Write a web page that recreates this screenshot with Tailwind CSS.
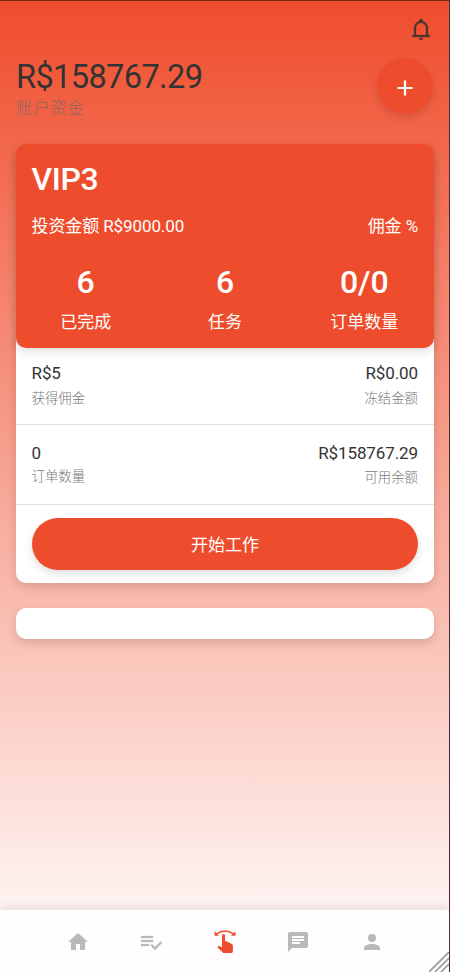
<!DOCTYPE html>
<html lang="zh">
<head>
<meta charset="utf-8">
<script src="https://cdn.jsdelivr.net/npm/@tailwindcss/browser@4"></script>
</head>
<body class="w-[450px] h-[972px] overflow-hidden">
<div class="relative flex h-[972px] w-[450px] flex-col overflow-hidden border-t border-r border-t-[#6e2c18] border-r-[#4a2a30] bg-[linear-gradient(#f04d2c,#fff)] font-['Roboto','Noto_Sans_CJK_SC',sans-serif] text-[#333]">
  <header class="flex h-[57px] shrink-0 justify-end pt-4 pr-4">
    <svg class="size-6" viewBox="0 0 24 24" fill="#4d3530" stroke="#4d3530" stroke-width="0.3"><path d="M10 21H14C14 22.1 13.1 23 12 23S10 22.1 10 21M21 19V20H3V19L5 17V11C5 7.9 7 5.2 10 4.3V4C10 2.9 10.9 2 12 2S14 2.9 14 4V4.3C17 5.2 19 7.9 19 11V17L21 19M17 11C17 8.2 14.8 6 12 6S7 8.2 7 11V18H17V11Z"/></svg>
  </header>
  <section class="flex h-[86px] shrink-0 justify-between px-4">
    <div>
      <div class="h-[38px] text-[32.5px] leading-[38px] tracking-[-0.6px]">R$158767.29</div>
      <div class="text-[17px] leading-6 font-light text-[#6a6a6a]/75">账户资金</div>
    </div>
    <div class="flex size-14 items-center justify-center rounded-full bg-[#ee4d2d] shadow-[0_4px_8px_rgba(0,0,0,0.12)]">
      <svg class="mt-[3px] size-[22px]" viewBox="0 0 24 24" fill="#fff"><path d="M20.2 13.2H13.2V20.2H10.8V13.2H3.8V10.8H10.8V3.8H13.2V10.8H20.2Z"/></svg>
    </div>
  </section>
  <main class="mr-[15px] ml-4 shrink-0">
    <section class="h-[439px] rounded-[10px] bg-[linear-gradient(transparent_160px,white_160px)] shadow-[0_4px_10px_rgba(0,0,0,0.14)]">
      <div class="h-[204px] rounded-[10px] bg-[#ee4d2d] pt-4 pr-4 pl-[15.5px] text-white shadow-[0_4px_8px_rgba(0,0,0,0.12)]">
        <h1 class="h-[38px] text-[32px] leading-[38px] font-medium tracking-[-0.4px]">VIP3</h1>
        <div class="mt-4 flex h-6 justify-between text-[17px] leading-6 tracking-[-0.1px]"><span>投资金额 R$9000.00</span><span>佣金 %</span></div>
        <div class="-mr-4 -ml-[15.5px] mt-6 grid grid-cols-3 text-center">
          <div><div class="text-[32px] leading-10 font-medium">6</div><div class="text-[17px] leading-10">已完成</div></div>
          <div><div class="text-[32px] leading-10 font-medium">6</div><div class="text-[17px] leading-10">任务</div></div>
          <div><div class="text-[32px] leading-10 font-medium">0/0</div><div class="text-[17px] leading-10">订单数量</div></div>
        </div>
      </div>
      <div class="flex h-[77px] justify-between border-b border-[#e0e0e0] pt-[13px] pr-4 pl-[15.5px]">
        <div><div class="text-[17px] leading-6 tracking-[-0.1px]">R$5</div><div class="text-[13.4px] leading-7 font-light text-[#777]">获得佣金</div></div>
        <div class="text-right"><div class="text-[17px] leading-6 tracking-[-0.1px]">R$0.00</div><div class="text-[13.4px] leading-7 font-light text-[#777]">冻结金额</div></div>
      </div>
      <div class="flex h-20 justify-between border-b border-[#e0e0e0] pt-4 pr-4 pl-[15.5px]">
        <div><div class="text-[17px] leading-6">0</div><div class="text-[13.4px] leading-[24px] font-light text-[#777]">订单数量</div></div>
        <div class="text-right"><div class="text-[17px] leading-6 tracking-[-0.1px]">R$158767.29</div><div class="text-[13.4px] leading-[26px] font-light text-[#777]">可用余额</div></div>
      </div>
      <div class="px-4 pt-[13px]"><button class="block h-[52px] w-full rounded-full bg-[#ee4d2d] pt-[3px] text-[17px] text-white shadow-[0_4px_8px_rgba(0,0,0,0.12)]">开始工作</button></div>
    </section>
    <section class="mt-[25px] h-[31px] rounded-[10px] bg-white shadow-[0_4px_10px_rgba(0,0,0,0.14)]"></section>
  </main>
  <nav class="mt-auto flex h-[62px] shrink-0 justify-center gap-[49.5px] bg-[#fffdfd] pt-[19.5px] text-[#b9b9b9] shadow-[0_-3px_9px_rgba(0,0,0,0.1)]">
    <svg class="size-6" viewBox="0 0 24 24" fill="currentColor"><path d="M10,20V14H14V20H19V12H22L12,3L2,12H5V20H10Z"/></svg>
    <svg class="size-6" viewBox="0 0 24 24" fill="currentColor" stroke="currentColor" stroke-width="0.3"><path d="M14 10H2v2h12v-2M14 6H2v2h12V6M2 16h8v-2H2v2M21.5 11.5L23 13l-7 7-4.5-4.5L13 14l3 3 5.5-5.5Z"/></svg>
    <svg class="size-6 text-[#ee4d2d]" viewBox="0 0 24 24" fill="currentColor"><path transform="translate(-1.4 -5.7) scale(1.12 1.25)" d="M9.3 9A1.35 1 0 0 1 12 9V13.47L13.21 13.6L18.15 15.79C18.68 16.03 19 16.56 19 17.14V21.5C18.97 22.32 18.32 22.97 17.5 23H11C10.62 23 10.26 22.85 10 22.57L5.1 18.37L5.84 17.6C6.03 17.39 6.3 17.28 6.58 17.28H6.8L9.3 18.5V9Z"/><path d="M3.4 3.9Q12-1.7 20.6 3.9" fill="none" stroke="currentColor" stroke-width="1.5"/><path d="M1.5 1.3V5.8H6ZM22.5 1.3V5.8H18Z"/></svg>
    <svg class="size-6" viewBox="0 0 24 24" fill="currentColor"><path d="M20 2H4c-1.1 0-1.99.9-1.99 2L2 22l4-4h14c1.1 0 2-.9 2-2V4c0-1.1-.9-2-2-2zM6 9h12v2H6V9zm8 5H6v-2h8v2zm4-6H6V6h12v2z"/></svg>
    <svg class="size-6" viewBox="0 0 24 24" fill="currentColor"><path d="M12,4A4,4 0 0,1 16,8A4,4 0 0,1 12,12A4,4 0 0,1 8,8A4,4 0 0,1 12,4M12,14C16.42,14 20,15.79 20,18V20H4V18C4,15.79 7.58,14 12,14Z"/></svg>
  </nav>
  <svg class="absolute right-0 bottom-0 size-5" viewBox="0 0 20 20" stroke="#999" stroke-width="1.6"><path d="M0 20L20 0M6 20L20 6M12 20L20 12"/></svg>
</div>
</body>
</html>
